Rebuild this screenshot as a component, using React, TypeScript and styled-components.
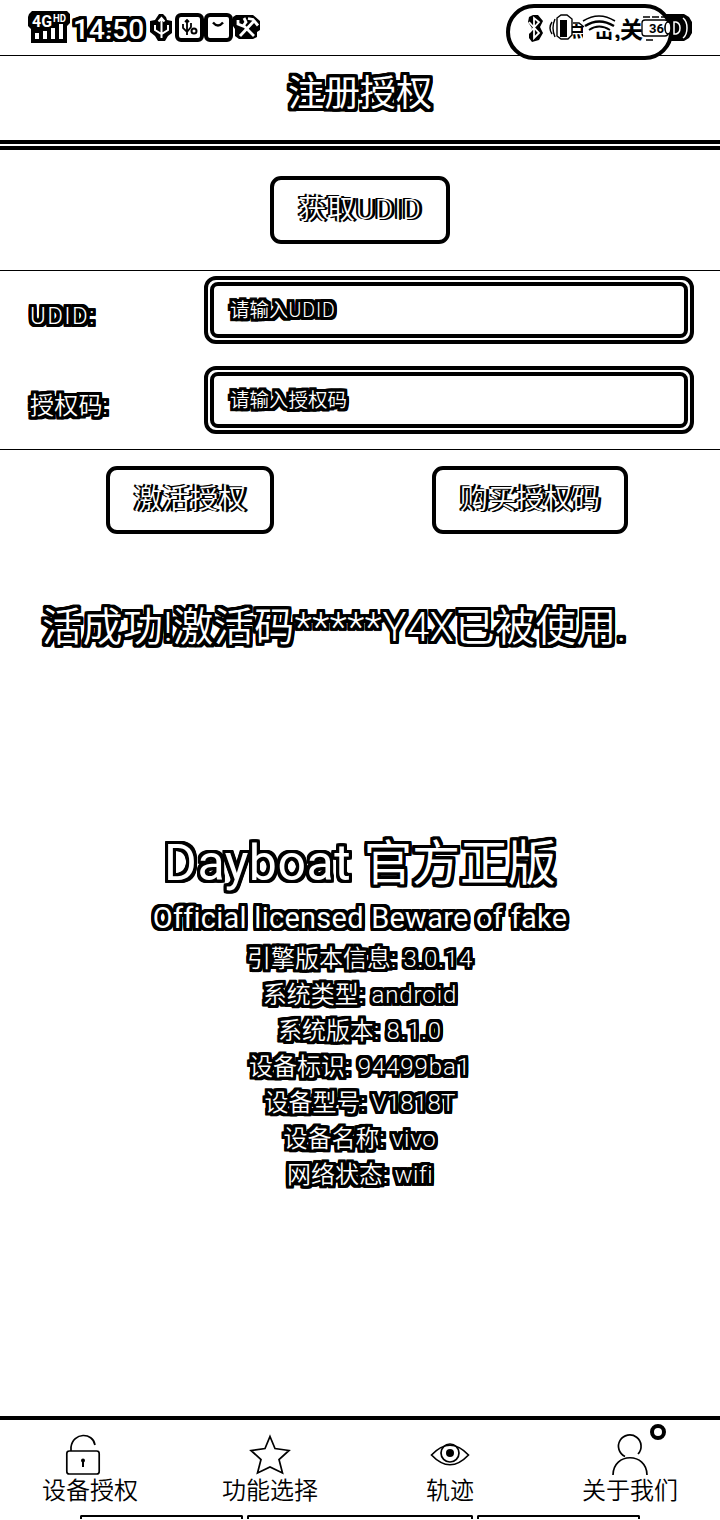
import React from "react";
import styled, { createGlobalStyle, css } from "styled-components";

const Global = createGlobalStyle`
  * { box-sizing: border-box; }
  body { margin: 0; background: #fff; color: #000; font-family: Roboto, "Noto Sans CJK SC", sans-serif; }
`;

const boxShadow = (r: number) => {
  const out: string[] = [];
  for (let x = -r; x <= r; x++)
    for (let y = -r; y <= r; y++) if (x || y) out.push(`${x}px ${y}px 0 #000`);
  return out.join(",");
};

const outline = css`
  color: #fff;
  text-shadow: ${boxShadow(3)};
`;

const Screen = styled.main`
  width: 720px;
  height: 1520px;
  display: flex;
  flex-direction: column;
  background: #fff;
  overflow: hidden;
  white-space: nowrap;
`;

const StatusBar = styled.header`
  position: relative;
  height: 56px;
  flex: none;
  border-bottom: 1px solid #000;
`;

const StatusLeft = styled.div`
  display: flex;
  align-items: flex-start;
  height: 55px;
  padding-left: 28px;
`;

const Clock = styled.span`
  ${outline};
  width: 75px;
  margin-left: 3px;
  margin-right: 1px;
  padding-top: 13px;
  font-size: 28px;
  line-height: 34px;
  font-weight: 500;
`;

const FloatingPill = styled.div`
  position: absolute;
  z-index: 1;
  top: 4px;
  left: 506px;
`;

const TitleBar = styled.h1`
  ${outline};
  margin: 0;
  height: 84px;
  flex: none;
  text-align: center;
  font-size: 36px;
  font-weight: 400;
  line-height: 77px;
`;

const DoubleRule = styled.div`
  height: 10px;
  flex: none;
  border-top: 4px solid #000;
  border-bottom: 4px solid #000;
`;

const FetchRow = styled.section`
  height: 121px;
  flex: none;
  display: flex;
  justify-content: center;
  padding-top: 26px;
  border-bottom: 1px solid #000;
`;

const Button = styled.button<{ $w: number; $spacing?: number }>`
  width: ${(p) => p.$w}px;
  height: 68px;
  padding: 0;
  border: 4px solid #000;
  border-radius: 11px;
  background: #fff;
  color: #fff;
  font-family: inherit;
  font-size: 28px;
  font-weight: 350;
  line-height: 40px;
  letter-spacing: ${(p) => p.$spacing ?? 0}px;
  text-shadow: 1px 0 #000, -1px 0 #000, 2px 0 #000, -2px 0 #000, 3px 0 #000, 2px 1px #000, -2px -1px #000;
`;

const Form = styled.section`
  height: 179px;
  flex: none;
  display: flex;
  flex-direction: column;
  gap: 22px;
  padding: 5px 26px 0 30px;
  border-bottom: 1px solid #000;
`;

const Field = styled.label`
  display: flex;
  align-items: center;
  height: 68px;
`;

const FieldName = styled.span<{ $spacing?: number }>`
  ${outline};
  width: 174px;
  padding-top: 12px;
  font-size: 24px;
  font-weight: 350;
  line-height: 30px;
  letter-spacing: ${(p) => p.$spacing ?? 0}px;
`;

const InputFrame = styled.span`
  width: 490px;
  height: 68px;
  padding: 2px;
  border: 4px solid #000;
  border-radius: 12px;
`;

const InputBox = styled.span`
  ${outline};
  display: block;
  height: 56px;
  padding-left: 16px;
  border: 4px solid #000;
  border-radius: 8px;
  font-size: 19.5px;
  font-weight: 350;
  line-height: 49px;
`;

const Latin = styled.span<{ $spacing: number; $size?: number }>`
  letter-spacing: ${(p) => p.$spacing}px;
  font-size: ${(p) => (p.$size ? `${p.$size}px` : "inherit")};
`;

const Actions = styled.section`
  display: flex;
  justify-content: space-between;
  flex: none;
  height: 150px;
  padding: 16px 92px 0 106px;
`;

const Message = styled.p`
  ${outline};
  margin: 0;
  height: 235px;
  flex: none;
  padding-left: 42px;
  font-size: 40px;
  font-weight: 350;
  line-height: 56px;
  letter-spacing: 0.54px;
`;

const Info = styled.section`
  ${outline};
  flex: 1;
  text-align: center;
  font-size: 24px;
  font-weight: 350;
  line-height: 36px;
`;

const Brand = styled.h2`
  margin: 0;
  height: 58px;
  font-size: 48px;
  font-weight: 400;
  line-height: 56px;
`;

const Official = styled.p`
  margin: 0;
  height: 48px;
  padding-top: 4px;
  font-size: 29px;
  font-weight: 400;
  line-height: 42px;
  letter-spacing: 0.25px;
  font-variant-ligatures: none;
`;

const InfoLine = styled.p`
  margin: 0;
`;

const TabBar = styled.nav`
  height: 104px;
  flex: none;
  display: grid;
  grid-template-columns: repeat(4, 1fr);
  grid-template-rows: 95px 5px;
  border-top: 4px solid #000;
`;

const Tab = styled.a`
  position: relative;
  display: flex;
  flex-direction: column;
  align-items: center;
  padding-top: 12px;
  font-size: 24px;
  font-weight: 350;
  line-height: 30px;
`;

const Badge = styled.i`
  position: absolute;
  left: 110px;
  top: 4px;
  width: 16px;
  height: 16px;
  border: 4px solid #000;
  border-radius: 50%;
`;

const BottomEdge = styled.div`
  grid-column: 1 / -1;
  display: flex;
  gap: 4px;
  padding: 0 80px;
`;

const EdgePiece = styled.span<{ $w: number }>`
  width: ${(p) => p.$w}px;
  height: 4px;
  border: solid #000;
  border-width: 2px 2px 0;
  border-radius: 2px 2px 0 0;
`;

const IconSvg = styled.svg`
  overflow: visible;
`;

const Icon = ({ children }: { children: React.ReactNode }) => (
  <IconSvg width="44" height="44" viewBox="0 0 44 44" fill="none" stroke="#000" strokeWidth="1.7">
    {children}
  </IconSvg>
);

const SignalIcons = () => (
  <svg width="42" height="46" viewBox="28 0 42 46">
    <path d="M32 11h35l3 3v9l-3 3v17H31V29l-3-3v-9l1-3z" fill="#000" />
    <g fill="#fff" fontFamily="Roboto" fontWeight="700">
      <text x="32" y="27" fontSize="16" textLength="20" lengthAdjust="spacingAndGlyphs">4G</text>
      <text x="53" y="22" fontSize="10" textLength="13" lengthAdjust="spacingAndGlyphs">HD</text>
    </g>
    <path d="M35 33h4v6h-4zM43 31h4v8h-4zM51 28h4v11h-4zM59 24h4v15h-4z" fill="#fff" />
  </svg>
);

const NoticeIcons = () => (
  <svg width="112" height="46" viewBox="149 0 112 46">
    <path d="M157 17l2-3h4l3 3 1 3 5 1v12l-4 3-3 5h-7l-3-5-5-4V21l5-1z" fill="#000" />
    <path d="M161.500 18v20M155 25v5l6.500 4 6.500-4v-5M158.500 21.500l3-3.500 3 3.500" fill="none" stroke="#fff" strokeWidth="2" />
    <rect x="177" y="15" width="25" height="25" rx="4" fill="#fff" stroke="#000" strokeWidth="4" />
    <path d="M187 20v15M183 24v4l4 4 4-5v-4M185 22l2-2 2 2" fill="none" stroke="#000" strokeWidth="1.8" />
    <circle cx="194" cy="31" r="2.5" fill="none" stroke="#000" strokeWidth="2" />
    <rect x="206" y="15" width="25" height="25" rx="4" fill="#fff" stroke="#000" strokeWidth="4" />
    <path d="M213 22.500q5 6 10 0" fill="none" stroke="#000" strokeWidth="2.4" />
    <path d="M233 17l3-2h17l7 6v9l-3 2v5l-4 2h-14l-4-3v-7l-2-3z" fill="#000" />
    <path d="M240 36l14-15M248 18.500l5 1 5 6M243 25l11 11M238 20v4l5 2 3-4-2-4" fill="none" stroke="#fff" strokeWidth="2.8" />
  </svg>
);

const PillGraphic = () => (
  <svg width="188" height="58" viewBox="506 4 188 58">
    <path d="M664 14h20l5 3 3 5v11l-3 5-5 3h-20z" fill="#000" />
    <rect x="508" y="6" width="163" height="52" rx="26" fill="#fff" stroke="#000" strokeWidth="4" />
    <path d="M529 17l4-2h5l5 6-3 6 3 6-4 7-7 2-3-4v-4l3-6-4-6z" fill="#000" />
    <path d="M529 22l10 11-5 5V18l5 4-10 11" fill="none" stroke="#fff" strokeWidth="1.8" />
    <path d="M552 22q-4 6 0 12M555 19q-4 9 0 18M557 18l4-3h6l5 4v16l-4 4h-7l-4-3z" fill="none" stroke="#000" strokeWidth="1.4" />
    <rect x="560" y="20" width="7" height="17" fill="#000" />
    <g fill="none" stroke="#000">
      <path d="M573 23h6l5 4M583 21q16-10 32 0" strokeWidth="1.5" />
      <path d="M585 26q14-9 29 0" strokeWidth="2.4" />
      <path d="M589 30q10-7 21 0" strokeWidth="1.8" />
    </g>
    <clipPath id="pill-left"><path d="M572 24h11v16h-11z" /></clipPath>
    <clipPath id="pill-low"><path d="M592 31h28v10h-28z" /></clipPath>
    <g fontFamily="Noto Sans CJK SC" fill="#000" fontWeight="700">
      <text x="567" y="37" fontSize="19" clipPath="url(#pill-left)">点</text>
      <text x="594" y="38" fontSize="20" clipPath="url(#pill-low)">击,</text>
      <text x="620" y="38" fontSize="23">关</text>
    </g>
    <rect x="642" y="20" width="26" height="16" rx="3" fill="#fff" stroke="#000" strokeWidth="1.3" />
    <text x="649" y="33" fontFamily="Roboto" fontSize="13" fontWeight="700">36</text>
    <path d="M643 17h22M646 40h9" fill="none" stroke="#000" strokeWidth="1.3" strokeDasharray="7 2" />
    <ellipse cx="668" cy="28" rx="3" ry="6" fill="#fff" stroke="#000" strokeWidth="1.6" />
    <path d="M674 22h2q4 1 4 6t-4 6h-2zM683 18q4 3 4 10t-4 10" fill="none" stroke="#fff" strokeWidth="1.5" />
  </svg>
);

const info: [string, string, number][] = [
  ["引擎版本信息", "3.0.14", 0.8],
  ["系统类型", "android", 0.9],
  ["系统版本", "8.1.0", 0.8],
  ["设备标识", "94499ba1", 0.9],
  ["设备型号", "V1818T", 0.2],
  ["设备名称", "vivo", 0.7],
  ["网络状态", "wifi", 0.4],
];

export default function App() {
  return (
    <Screen>
      <Global />
      <StatusBar>
        <StatusLeft>
          <SignalIcons />
          <Clock>14:50</Clock>
          <NoticeIcons />
        </StatusLeft>
        <FloatingPill>
          <PillGraphic />
        </FloatingPill>
      </StatusBar>
      <TitleBar>注册授权</TitleBar>
      <DoubleRule />
      <FetchRow>
        <Button $w={180} $spacing={0.8}>获取UDID</Button>
      </FetchRow>
      <Form>
        <Field>
          <FieldName $spacing={1.4}>UDID:</FieldName>
          <InputFrame><InputBox>请输入<Latin $spacing={0.9}>UDID</Latin></InputBox></InputFrame>
        </Field>
        <Field>
          <FieldName $spacing={0.2}>授权码:</FieldName>
          <InputFrame><InputBox>请输入授权码</InputBox></InputFrame>
        </Field>
      </Form>
      <Actions>
        <Button $w={168}>激活授权</Button>
        <Button $w={196}>购买授权码</Button>
      </Actions>
      <Message>活成功!激活码*****Y4X已被使用.</Message>
      <Info>
        <Brand><Latin $spacing={0.5} $size={50}>Dayboat </Latin>官方正版</Brand>
        <Official>Official licensed Beware of fake</Official>
        {info.map(([name, value, spacing]) => (
          <InfoLine key={name}>
            {name}<Latin $spacing={spacing}>: {value}</Latin>
          </InfoLine>
        ))}
      </Info>
      <TabBar>
        <Tab>
          <Icon>
            <rect x="-1.2" y="19" width="32.4" height="23" rx="2.5" />
            <path d="M3 19v-4C5 0 25 0 27 13" />
            <circle cx="15" cy="28.5" r="2" fill="#000" stroke="none" />
            <path d="M15 28v7" strokeWidth="2" />
          </Icon>
          设备授权
        </Tab>
        <Tab>
          <Icon>
            <path d="M22 4.500l5 12 14 2-10 9 3.500 13.500-12.500-6-12.500 6 3.500-13.500-10-9 14-2z" />
          </Icon>
          功能选择
        </Tab>
        <Tab>
          <Icon>
            <path d="M3.500 23Q22 3.500 40.500 23Q22 42.500 3.500 23z" />
            <circle cx="22" cy="21" r="9" />
            <circle cx="22" cy="21" r="4" fill="#000" stroke="none" />
          </Icon>
          轨迹
        </Tab>
        <Tab>
          <Icon>
            <path d="M30 22a11.300 11.300 0 1 0-13 2.500" />
            <path d="M5 43C5 20 39 20 39 43" />
          </Icon>
          关于我们
          <Badge />
        </Tab>
        <BottomEdge>
          <EdgePiece $w={163} />
          <EdgePiece $w={226} />
          <EdgePiece $w={163} />
        </BottomEdge>
      </TabBar>
    </Screen>
  );
}
